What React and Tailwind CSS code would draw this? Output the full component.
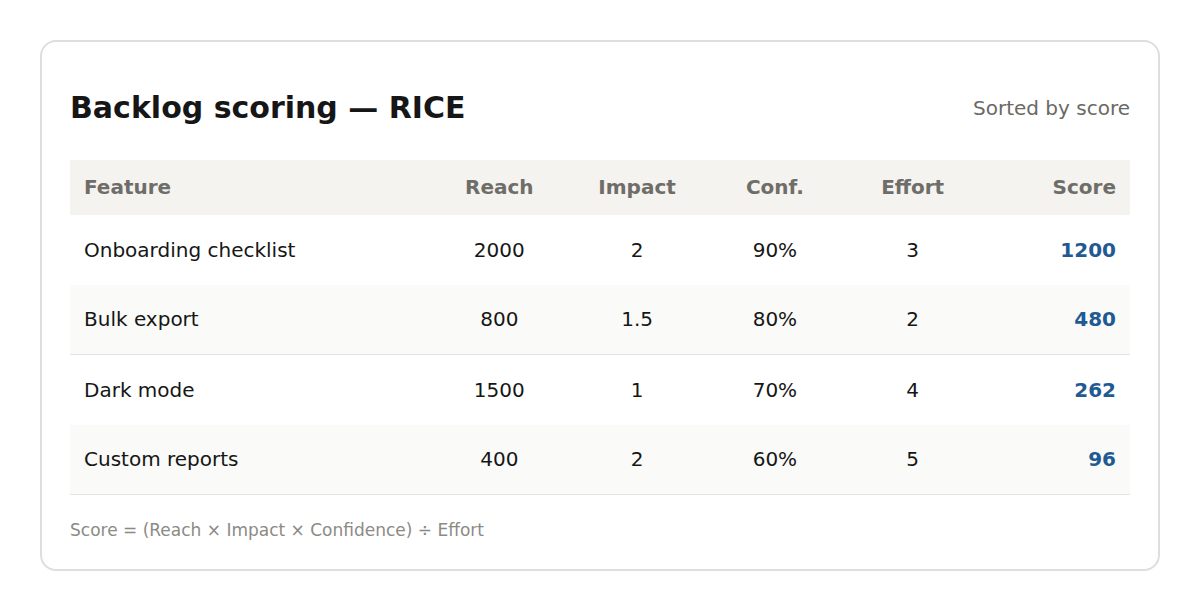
import React from 'react';

const rows = [
  { feature: 'Onboarding checklist', reach: '2000', impact: '2', conf: '90%', effort: '3', score: '1200' },
  { feature: 'Bulk export', reach: '800', impact: '1.5', conf: '80%', effort: '2', score: '480' },
  { feature: 'Dark mode', reach: '1500', impact: '1', conf: '70%', effort: '4', score: '262' },
  { feature: 'Custom reports', reach: '400', impact: '2', conf: '60%', effort: '5', score: '96' },
];

const cols = 'grid grid-cols-[34%_13%_13%_13%_13%_1fr] items-center';

export default function App() {
  return (
    <div className="min-h-screen bg-white p-10 [font-family:'DejaVu_Sans',sans-serif]">
      <div className="border-2 border-[#dedede] rounded-2xl bg-white px-[28px] pt-[28px] pb-[27px]">
        <div className="flex items-center justify-between h-[76px] mb-[14px]">
          <h1 className="text-[30px] font-bold text-[#161616] leading-tight">Backlog scoring — RICE</h1>
          <span className="text-[20px] text-[#6b6963]">Sorted by score</span>
        </div>

        <div>
          <div className={`${cols} h-[55px] pb-px bg-[#f4f3ef] text-[20px] font-bold text-[#6f6d68]`}>
            <div className="px-[14px]">Feature</div>
            <div className="text-center">Reach</div>
            <div className="text-center">Impact</div>
            <div className="text-center">Conf.</div>
            <div className="text-center">Effort</div>
            <div className="text-right px-[14px]">Score</div>
          </div>
          {rows.map((r, i) => (
            <div
              key={r.feature}
              className={`${cols} h-[70px] pb-px text-[20px] text-[#161616] ${i % 2 === 1 ? 'bg-[#fafaf8] border-b border-[#e3e3e0]' : 'bg-white'}`}
            >
              <div className="px-[14px]">{r.feature}</div>
              <div className="text-center">{r.reach}</div>
              <div className="text-center">{r.impact}</div>
              <div className="text-center">{r.conf}</div>
              <div className="text-center">{r.effort}</div>
              <div className="text-right px-[14px] font-bold text-[#1f5a94]">{r.score}</div>
            </div>
          ))}
        </div>

        <p className="mt-[23px] text-[17px] leading-[24px] text-[#8c8a85]">
          Score = (Reach × Impact × Confidence) ÷ Effort
        </p>
      </div>
    </div>
  );
}
